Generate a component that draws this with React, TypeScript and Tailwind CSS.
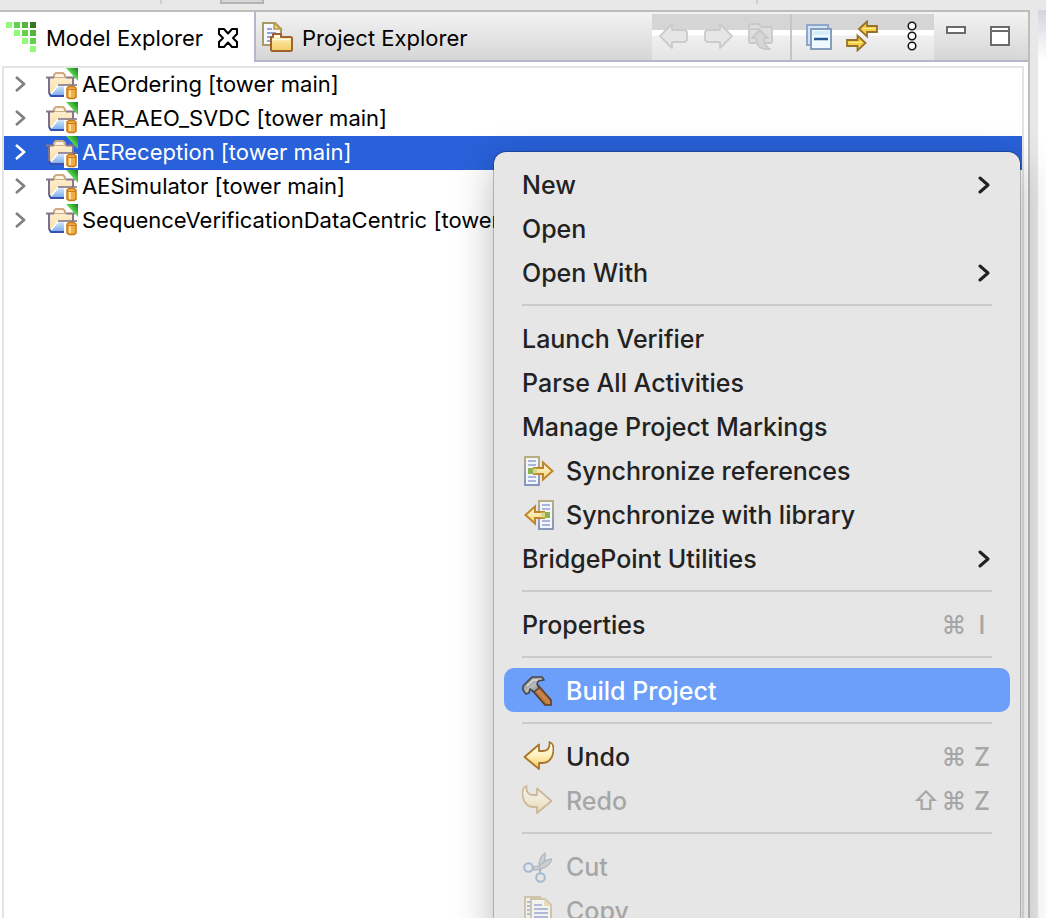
import { useState, type ReactNode } from "react";

function ModelTabIcon() {
  const cells: [number, number, string][] = [
    [0, 0, "#90fb78"], [8, 0, "#63d24a"], [16, 0, "#55b43c"], [24, 0, "#3b7429"],
    [8, 8, "#90fb78"], [16, 8, "#63d24a"], [24, 8, "#55b43c"],
    [16, 16, "#90fb78"], [24, 16, "#63d24a"],
    [24, 24, "#90fb78"],
  ];
  return (
    <svg className="size-8 shrink-0" viewBox="0 0 32 32" aria-hidden="true">
      {cells.map(([x, y, fill]) => (
        <rect key={`${x}-${y}`} x={x + 1} y={y} width="6" height="6" fill={fill} />
      ))}
    </svg>
  );
}

function CloseIcon() {
  return (
    <svg className="size-[22px]" viewBox="0 0 22 22" fill="#fff" stroke="#000" strokeWidth="2" strokeLinejoin="round" aria-hidden="true">
      <path d="M2 2h5l4 4.500L15 2h5v5l-4 4 4 4v5h-5l-4-4.500L7 20H2v-5l4-4-4-4z" />
    </svg>
  );
}

function ProjectTabIcon() {
  return (
    <svg className="size-8 shrink-0" viewBox="0 0 32 32" aria-hidden="true">
      <defs>
        <linearGradient id="folderFill" x1="0" y1="0" x2="0" y2="1">
          <stop offset="0" stopColor="#fff2b8" />
          <stop offset="1" stopColor="#f3cb68" />
        </linearGradient>
      </defs>
      <path d="M1 1h12l6 6v16H1z" fill="#f7f9ff" stroke="#a89a68" strokeWidth="2" />
      <path d="M12 1v6h7z" fill="#e9cf85" stroke="#b99a4c" strokeWidth="1.500" />
      <path d="M5 7h5M5 11h9M5 15h5M5 19h4" stroke="#8fa7dd" strokeWidth="2" />
      <path d="M9 17v-2h2v-3h8v3h10l1 1v12l-1 1H10l-1-1z" fill="url(#folderFill)" stroke="#a2622c" strokeWidth="2" strokeLinejoin="round" />
      <path d="M12 13.500h6v2h-6z" fill="#fff" />
      <path d="M10.500 17.500h18" stroke="#fffbe3" strokeWidth="1.500" />
    </svg>
  );
}

function TreeFolderIcon() {
  return (
    <svg className="size-8 shrink-0" viewBox="0 0 32 32" aria-hidden="true">
      <defs>
        <linearGradient id="treeFlap" x1="0" y1="0" x2="0" y2="1">
          <stop offset="0" stopColor="#fdeecb" />
          <stop offset="1" stopColor="#f5dba2" />
        </linearGradient>
        <linearGradient id="treeBlue" x1="0" y1="0" x2="0" y2="1">
          <stop offset="0" stopColor="#d3e6fb" />
          <stop offset="1" stopColor="#7fb0ee" />
        </linearGradient>
        <linearGradient id="treeCorner" x1="0" y1="1" x2="1" y2="0">
          <stop offset="0" stopColor="#7dee68" />
          <stop offset="0.500" stopColor="#5fd750" />
          <stop offset="1" stopColor="#0d7d1b" />
        </linearGradient>
      </defs>
      <path d="M8 10V7l2-2h7l2 2v3z" fill="#fdf3df" stroke="#cfab82" strokeWidth="2" />
      <path d="M3 10h24v8H12L5 27l-2-2z" fill="url(#treeFlap)" />
      <path d="M0 9.500h8M20 9.500h9" stroke="#8a7788" strokeWidth="2" />
      <path d="M3 10v15" stroke="#7a7096" strokeWidth="2" />
      <path d="M27 10v7" stroke="#8a7a90" strokeWidth="2" />
      <path d="M12 18h18l-3 9H5z" fill="url(#treeBlue)" />
      <path d="M5 26l7-8.500h7" stroke="#fff" strokeWidth="1.500" fill="none" />
      <path d="M12 17h19" stroke="#7a6c88" strokeWidth="1.500" />
      <path d="M3 25l2 3h15" stroke="#3a4fae" strokeWidth="2" fill="none" />
      <path d="M20 0h12v13z" fill="url(#treeCorner)" />
      <path d="M18 18h14v14H18z" fill="#fff" />
      <path d="M21 20l2-1.500h5l2 1.500v9l-2 1.500h-5L21 29z" fill="#f5ad42" stroke="#c47c1e" strokeWidth="1.500" />
      <path d="M24 22v7" stroke="#ffe3a5" strokeWidth="2" />
      <path d="M21 21.500h9" stroke="#c47c1e" strokeWidth="1" />
    </svg>
  );
}

function Chevron({ className }: { className: string }) {
  return (
    <svg className={className} viewBox="0 0 12 20" fill="none" stroke="currentColor" strokeWidth="3" strokeLinecap="round" strokeLinejoin="round" aria-hidden="true">
      <path d="M2 3l8 7-8 7" />
    </svg>
  );
}

function BackIcon() {
  return (
    <svg className="size-8" viewBox="0 0 32 32" fill="#e6e6e6" stroke="#cbcbcb" strokeWidth="1.800" strokeLinejoin="round" aria-hidden="true">
      <path d="M2 16L14 4v6h13l2 2v8l-2 2H14v6z" />
    </svg>
  );
}

function ForwardIcon() {
  return (
    <svg className="size-8" viewBox="0 0 32 32" fill="#e6e6e6" stroke="#cbcbcb" strokeWidth="1.800" strokeLinejoin="round" aria-hidden="true">
      <path d="M30 16L18 4v6H5l-2 2v8l2 2h13v6z" />
    </svg>
  );
}

function UpIcon() {
  return (
    <svg className="size-8" viewBox="0 0 32 32" fill="#dedede" stroke="#c9c9c9" strokeWidth="1.800" strokeLinejoin="round" aria-hidden="true">
      <path d="M4 23l-1-1V6l2-2h8l2 3h10l1 2v13l-1 1z" />
      <path d="M4 9h10" />
      <path d="M14 10l8 8h-4c0 5 2 9 6 11-8 1-14-2-14-11H6z" fill="#d6d6d6" />
    </svg>
  );
}

function CollapseAllIcon() {
  return (
    <svg className="size-8" viewBox="0 0 32 32" aria-hidden="true">
      <path d="M3 5h21v20H3z" fill="#cfe4f5" stroke="#8fa6c4" strokeWidth="2" />
      <path d="M7 9h20v20H7z" fill="#eefaff" stroke="#869dbd" strokeWidth="2" />
      <path d="M9 11h16v4H9z" fill="#d5edfa" />
      <path d="M10 19h14" stroke="#265a94" strokeWidth="2.500" />
    </svg>
  );
}

function LinkIcon() {
  return (
    <svg className="size-8" viewBox="0 0 32 32" fill="#f6cf45" stroke="#97712b" strokeWidth="1.800" strokeLinejoin="miter" aria-hidden="true">
      <path d="M13 9l8-7.500V6h10v6H21v4.500z" />
      <path d="M19.500 23l-8-7.500V20H1v6h10.500v4.500z" />
      <path d="M17 8.500h12M3 22.500h13" stroke="#fff08d" strokeWidth="1.200" />
    </svg>
  );
}

function MoreIcon() {
  return (
    <svg className="h-8 w-4" viewBox="0 0 16 32" fill="#fff" stroke="#111" strokeWidth="1.500" aria-hidden="true">
      <circle cx="8" cy="6" r="3.800" />
      <circle cx="8" cy="16" r="3.800" />
      <circle cx="8" cy="26" r="3.800" />
    </svg>
  );
}

function SyncIcon({ flip = false }: { flip?: boolean }) {
  return (
    <svg className="size-8 shrink-0" viewBox="0 0 32 32" aria-hidden="true">
      <defs>
        <linearGradient id="syncArrow" x1="0" y1="0" x2="0" y2="1">
          <stop offset="0" stopColor="#fffbe0" />
          <stop offset="1" stopColor="#f5d673" />
        </linearGradient>
        <linearGradient id="syncPage" x1="0" y1="0" x2="0" y2="1">
          <stop offset="0" stopColor="#b9ae82" />
          <stop offset="1" stopColor="#8796bb" />
        </linearGradient>
      </defs>
      <g transform={flip ? "translate(34 0) scale(-1 1)" : undefined}>
        <path d="M3 2h14v28H3z" fill="#f1f5fd" stroke="url(#syncPage)" strokeWidth="2" />
        <path d="M6 6h8M6 10h8M6 22h8M6 26h8" stroke="#a9b6d8" strokeWidth="2" />
        <path d="M6 13h7v6H6z" fill="#8eb04e" />
        <path d="M12 13h9V7.500l9.500 8.500-9.500 8.500V19h-9z" fill="url(#syncArrow)" stroke="#bf8529" strokeWidth="2" />
        <path d="M11 13.500h4v5h-4z" fill="#d5d889" />
      </g>
    </svg>
  );
}

function HammerIcon() {
  return (
    <svg className="size-8 shrink-0" viewBox="0 0 32 32" aria-hidden="true">
      <defs>
        <linearGradient id="hammerHandle" x1="0" y1="1" x2="1" y2="0">
          <stop offset="0.200" stopColor="#5f3a1e" />
          <stop offset="0.500" stopColor="#cf8b4c" />
          <stop offset="0.800" stopColor="#7a4a26" />
        </linearGradient>
        <linearGradient id="hammerHead" x1="0" y1="0" x2="1" y2="1">
          <stop offset="0" stopColor="#6c6c6c" />
          <stop offset="0.500" stopColor="#bdbdbd" />
          <stop offset="1" stopColor="#5a5a5a" />
        </linearGradient>
      </defs>
      <path d="M10 15l6-5 13 15v5h-6z" fill="url(#hammerHandle)" stroke="#5e3d24" strokeWidth="1.600" />
      <path d="M1 11l4-4 5-5h10l2 3-6 1-1 3 2 4-5 4-4-3-1 4-3 1-3-4z" fill="url(#hammerHead)" stroke="#474747" strokeWidth="1.600" strokeLinejoin="round" />
      <path d="M5 11l6-6h5" stroke="#ddd" strokeWidth="1.500" fill="none" />
    </svg>
  );
}

function UndoIcon({ flip = false }: { flip?: boolean }) {
  return (
    <svg className={flip ? "size-8 shrink-0 opacity-40" : "size-8 shrink-0"} viewBox="0 0 32 32" aria-hidden="true">
      <defs>
        <linearGradient id="undoFill" x1="0" y1="0" x2="0" y2="1">
          <stop offset="0" stopColor="#fff" />
          <stop offset="0.500" stopColor="#fff0bd" />
          <stop offset="1" stopColor="#f6c860" />
        </linearGradient>
      </defs>
      <g transform={flip ? "translate(32 0) scale(-1 1)" : undefined}>
        <path d="M2.500 16L17 3.500V10h3c6 0 8-3 7.500-9 3 1 4 3 4 7 0 9-5 14-11 14H17v6z" fill="url(#undoFill)" stroke="#a87528" strokeWidth="1.800" strokeLinejoin="round" />
      </g>
    </svg>
  );
}

function CutIcon() {
  return (
    <svg className="size-8 shrink-0 opacity-60" viewBox="0 0 32 32" aria-hidden="true">
      <path d="M23 2c-5 3-6 8-6 14l3 2c1-5 4-9 3-16z" fill="#bcc3cd" stroke="#909aa9" strokeWidth="1.300" />
      <path d="M29.500 8c-5 0-9 4-12 7l-7 1 1 3c8 0 17-4 18-11z" fill="#bcc3cd" stroke="#909aa9" strokeWidth="1.300" />
      <path d="M18 16v6" stroke="#909aa9" strokeWidth="2" />
      <circle cx="6.500" cy="16.500" r="4.300" fill="#e6e6e6" stroke="#779cc4" strokeWidth="2" />
      <circle cx="18.500" cy="26.500" r="4.300" fill="#e6e6e6" stroke="#779cc4" strokeWidth="2" />
    </svg>
  );
}

function CopyIcon() {
  return (
    <svg className="size-8 shrink-0 opacity-50" viewBox="0 0 32 32" aria-hidden="true">
      <path d="M3 2h15v24H3z" fill="#f7f8fc" stroke="#b8a570" strokeWidth="2" />
      <path d="M5 7h4M5 11h4M5 15h4M5 19h4" stroke="#7a92c8" strokeWidth="2" />
      <path d="M9 4h14l6 6v20H9z" fill="#fff" stroke="#b8a570" strokeWidth="2" />
      <path d="M22 4v7h7z" fill="#ead597" />
      <path d="M12 10h8M12 14h14M12 18h14M12 22h14" stroke="#7a92c8" strokeWidth="2" />
    </svg>
  );
}

const projects = [
  "AEOrdering [tower main]",
  "AER_AEO_SVDC [tower main]",
  "AEReception [tower main]",
  "AESimulator [tower main]",
  "SequenceVerificationDataCentric [tower main]",
];

type Entry = {
  label: string;
  icon?: ReactNode;
  submenu?: boolean;
  keys?: string[];
  disabled?: boolean;
  active?: boolean;
};

const groups: Entry[][] = [
  [{ label: "New", submenu: true }, { label: "Open" }, { label: "Open With", submenu: true }],
  [
    { label: "Launch Verifier" },
    { label: "Parse All Activities" },
    { label: "Manage Project Markings" },
    { label: "Synchronize references", icon: <SyncIcon /> },
    { label: "Synchronize with library", icon: <SyncIcon flip /> },
    { label: "BridgePoint Utilities", submenu: true },
  ],
  [{ label: "Properties", keys: ["⌘", "I"] }],
  [{ label: "Build Project", icon: <HammerIcon />, active: true }],
  [
    { label: "Undo", icon: <UndoIcon />, keys: ["⌘", "Z"] },
    { label: "Redo", icon: <UndoIcon flip />, keys: ["⇧", "⌘", "Z"], disabled: true },
  ],
  [
    { label: "Cut", icon: <CutIcon />, disabled: true },
    { label: "Copy", icon: <CopyIcon />, disabled: true },
  ],
];

function MenuRow({ entry }: { entry: Entry }) {
  const tone = entry.active
    ? "bg-[#6c9ff9] text-white"
    : entry.disabled
      ? "text-[#a6a6a6]"
      : "text-[#222222]";
  return (
    <li role="none">
      <button
        type="button"
        role="menuitem"
        disabled={entry.disabled}
        className={`flex h-11 w-full items-center gap-3 rounded-[10px] px-[18px] pt-[2px] text-left text-[25px] leading-8 font-[450] ${tone}`}
      >
        {entry.icon}
        <span className="flex-1 whitespace-nowrap">{entry.label}</span>
        {entry.submenu && <Chevron className="mr-[2px] h-5 w-3" />}
        {entry.keys && (
          <kbd className="-mr-1 flex font-[Inter,sans-serif] text-[#a6a6a6]">
            {entry.keys.map((key) => (
              <span key={key} className="w-7 text-center">{key}</span>
            ))}
          </kbd>
        )}
      </button>
    </li>
  );
}

function ContextMenu() {
  return (
    <ul
      role="menu"
      aria-label="Project actions"
      className="absolute top-[152px] left-[494px] w-[526px] rounded-[12px] bg-[#e6e6e6] p-[10px] shadow-[0_0_0_1px_rgba(0,0,0,0.22),0_12px_40px_rgba(0,0,0,0.28)]"
    >
      {groups.map((group, index) => (
        <li key={group[0].label} role="none">
          {index > 0 && <hr className="mx-[18px] my-[10px] border-t-2 border-[#cbcbcb]" />}
          <ul role="group">
            {group.map((entry) => (
              <MenuRow key={entry.label} entry={entry} />
            ))}
          </ul>
        </li>
      ))}
    </ul>
  );
}

function ToolButton({ label, children }: { label: string; children: ReactNode }) {
  return (
    <button type="button" aria-label={label} className="flex h-11 items-center justify-center">
      {children}
    </button>
  );
}

function TabBar() {
  return (
    <header className="flex h-[50px] shrink-0">
      <div className="flex w-[254px] shrink-0 items-center justify-between bg-white pt-[2px] pr-[15px] pl-[5px]">
        <button type="button" className="flex items-center gap-[9px] whitespace-nowrap">
          <ModelTabIcon />
          Model Explorer
        </button>
        <button type="button" aria-label="Close Model Explorer">
          <CloseIcon />
        </button>
      </div>
      <div className="flex min-w-0 flex-1 border-b-2 border-l-2 border-[#b4b7cc] bg-linear-to-b from-[#f3f3f3] to-[#d6d6d6]">
        <button type="button" className="flex items-center gap-2 pt-1 pl-[6px] whitespace-nowrap">
          <ProjectTabIcon />
          Project Explorer
        </button>
        <div className="mt-[2px] ml-auto flex bg-[linear-gradient(#d5d5d5_0,#d5d5d5_16px,#ffffff_16px,#ffffff_21px,#f0f0f0_22px,#e3e3e3_100%)]">
          <div className="flex gap-3 border-r-2 border-[#c6c6c6] pr-3 pl-[6px]">
            <ToolButton label="Back"><BackIcon /></ToolButton>
            <ToolButton label="Forward"><ForwardIcon /></ToolButton>
            <ToolButton label="Up"><UpIcon /></ToolButton>
          </div>
          <div className="flex gap-[10px] pr-[14px] pl-3">
            <ToolButton label="Collapse All"><CollapseAllIcon /></ToolButton>
            <ToolButton label="Link with Editor"><LinkIcon /></ToolButton>
            <span className="pl-4">
              <ToolButton label="View Menu"><MoreIcon /></ToolButton>
            </span>
          </div>
        </div>
        <div className="flex items-start gap-6 pt-[14px] pr-[18px] pl-3">
          <button type="button" aria-label="Minimize" className="h-2 w-5 border-2 border-[#6a6a6a] bg-white" />
          <button type="button" aria-label="Maximize" className="flex h-5 w-5 items-start border-2 border-[#6a6a6a] bg-white pt-[2px]">
            <span className="h-[2px] flex-1 bg-[#6a6a6a]" />
          </button>
        </div>
      </div>
    </header>
  );
}

function ProjectTree() {
  const [selected, setSelected] = useState(2);
  return (
    <ul role="tree" aria-label="Projects" className="mx-[2px] mt-1 mr-1 flex-1 border-2 border-b-0 border-[#e4e4e4] bg-white">
      {projects.map((name, index) => {
        const active = index === selected;
        return (
          <li key={name} role="treeitem" aria-selected={active}>
            <button
              type="button"
              onClick={() => setSelected(index)}
              className={`flex h-[34px] w-full items-center pb-[2px] text-left whitespace-nowrap ${active ? "bg-[#2861d9] text-white" : "text-black"}`}
            >
              <Chevron className={`mr-5 ml-[11px] h-[18px] w-[11px] shrink-0 ${active ? "text-white" : "text-[#808080]"}`} />
              <TreeFolderIcon />
              <span className="pl-1">{name}</span>
            </button>
          </li>
        );
      })}
    </ul>
  );
}

export default function App() {
  return (
    <div className="relative flex h-screen flex-col overflow-hidden bg-[#e8e8e8] font-[Inter,sans-serif] text-[22px] leading-7 text-black">
      <div className="flex h-[10px] shrink-0 items-start">
        <span className="ml-[160px] h-1 w-[2px] bg-[#cfcfcf]" />
        <span className="ml-[58px] h-1 w-11 border-2 border-t-0 border-[#b4b4b4] bg-[#d6d6d6]" />
        <span className="ml-[492px] h-1 w-[2px] bg-[#cfcfcf]" />
      </div>
      <div className="flex min-h-0 flex-1 gap-2">
        <main className="flex min-w-0 flex-1 flex-col border-t-2 border-r-2 border-[#bdbdba] bg-white">
          <TabBar />
          <ProjectTree />
        </main>
        <aside className="w-2 shrink-0 bg-white bg-[linear-gradient(#d3d5e0_0,#ffffff_50px)]" />
      </div>
      <ContextMenu />
    </div>
  );
}
